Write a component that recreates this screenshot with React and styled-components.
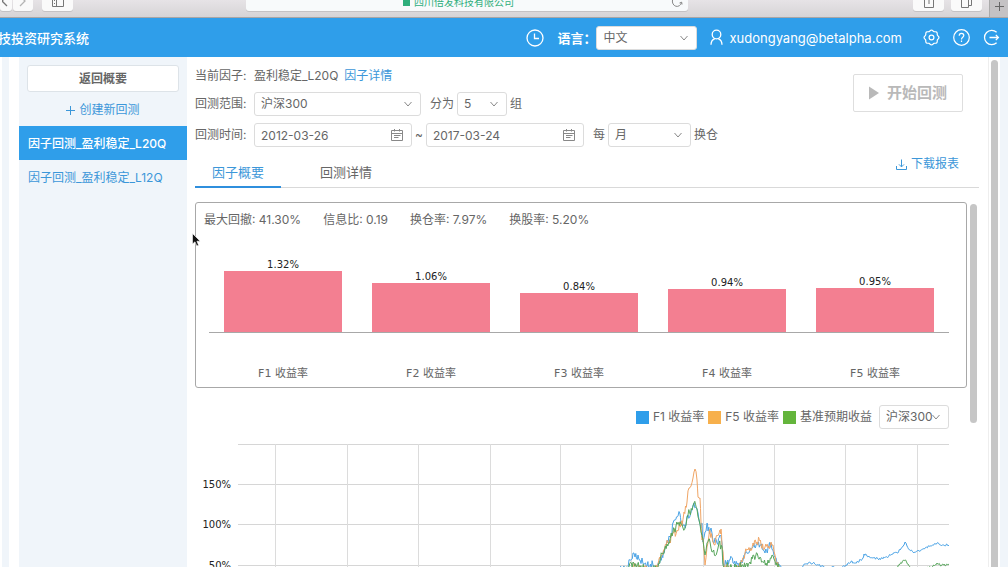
import React from 'react'
import styled, { createGlobalStyle } from 'styled-components'

const factors = [
    { name: 'F1 收益率', value: 1.32 },
    { name: 'F2 收益率', value: 1.06 },
    { name: 'F3 收益率', value: 0.84 },
    { name: 'F4 收益率', value: 0.94 },
    { name: 'F5 收益率', value: 0.95 },
]

const stats = ['最大回撤: 41.30%', '信息比: 0.19', '换仓率: 7.97%', '换股率: 5.20%']

const legend = [
    { name: 'F1 收益率', color: '#2f9eea' },
    { name: 'F5 收益率', color: '#f7b04c' },
    { name: '基准预期收益', color: '#64b53c' },
]

const gridX = [80, 152, 223, 295, 365, 436, 508, 579, 650, 722]
const gridY = [
    { y: 4, label: '' },
    { y: 44, label: '150%' },
    { y: 84, label: '100%' },
    { y: 125, label: '50%' },
    { y: 165, label: '0%' },
]

const f1 = [[400, 140], [433, 128], [435, 120], [438, 113], [440, 117], [443, 115], [445, 120], [447, 118], [449, 124], [452, 126], [458, 125], [462, 126], [464, 121], [467, 115], [470, 108], [473, 103], [475, 97], [477, 92], [478, 83], [480, 80], [483, 76], [485, 74], [486, 83], [488, 85], [491, 84], [493, 75], [497, 70], [499, 63], [502, 69], [504, 80], [506, 88], [507, 83], [508, 102], [510, 92], [512, 83], [513, 91], [516, 88], [518, 102], [520, 98], [522, 103], [525, 95], [527, 103], [528, 123], [532, 122], [535, 120], [538, 123], [543, 123], [547, 123], [549, 115], [553, 113], [558, 107], [562, 104], [565, 105], [568, 110], [570, 113], [573, 108], [576, 103], [578, 110], [580, 117], [582, 123], [584, 125], [592, 132], [604, 130], [610, 124], [613, 123], [618, 123], [623, 125], [627, 126], [632, 129], [638, 127], [645, 129], [651, 125], [653, 123], [657, 121], [658, 123], [663, 122], [668, 118], [669, 114], [673, 117], [678, 118], [683, 119], [692, 117], [697, 114], [702, 113], [705, 110], [708, 106], [710, 102], [712, 106], [715, 110], [718, 112], [723, 111], [728, 109], [735, 106], [742, 103], [745, 105], [754, 105]]
const f5 = [[400, 142], [433, 132], [440, 126], [450, 130], [462, 128], [467, 115], [473, 103], [477, 96], [482, 90], [486, 82], [487, 86], [489, 72], [492, 62], [494, 48], [496, 46], [498, 38], [500, 29], [502, 40], [503, 57], [505, 58], [506, 83], [507, 100], [508, 98], [510, 125], [512, 107], [514, 95], [515, 92], [518, 102], [520, 105], [522, 95], [525, 90], [526, 89], [527, 107], [529, 125], [535, 130], [543, 130], [547, 122], [550, 113], [553, 110], [555, 111], [558, 103], [562, 102], [565, 101], [566, 105], [570, 107], [573, 108], [576, 102], [578, 105], [580, 115], [582, 125], [590, 136], [650, 140], [754, 140]]
const base = [[400, 140], [433, 130], [438, 122], [445, 127], [455, 131], [463, 127], [467, 114], [472, 104], [477, 96], [481, 86], [486, 84], [488, 88], [491, 85], [493, 75], [497, 70], [499, 63], [502, 69], [504, 80], [506, 92], [508, 100], [510, 115], [512, 103], [515, 102], [517, 112], [522, 112], [524, 103], [527, 107], [528, 125], [535, 128], [543, 127], [547, 125], [552, 123], [555, 122], [558, 115], [565, 117], [568, 122], [571, 123], [573, 120], [577, 115], [579, 119], [581, 125], [590, 134], [690, 134], [701, 129], [705, 124], [710, 120], [713, 124], [716, 128], [730, 129], [737, 127], [742, 123], [745, 125], [754, 125]]

// adds daily wobble between the sampled points
const toPath = (points, seed) => {
    let s = seed
    const rand = () => {
        s = (s * 16807) % 2147483647
        return s / 2147483647 - 0.5
    }
    let d = 'M' + points[0].join(' ')
    for (let i = 1; i < points.length; i++) {
        const [x0, y0] = points[i - 1]
        const [x1, y1] = points[i]
        const steps = Math.max(2, Math.round((x1 - x0) * 1.2))
        const amp = x1 > 590 ? 2.4 : 9
        for (let k = 1; k < steps; k++) {
            const t = k / steps
            d += `L${(x0 + (x1 - x0) * t).toFixed(1)} ${(y0 + (y1 - y0) * t + rand() * amp).toFixed(1)}`
        }
        d += `L${x1} ${y1}`
    }
    return d
}

const gearPath = () => {
    let d = ''
    for (let i = 0; i <= 64; i++) {
        const a = (i / 64) * Math.PI * 2
        const r = 6.9 + 0.55 * Math.cos(a * 8)
        d += `${i ? 'L' : 'M'}${(8.5 + r * Math.cos(a)).toFixed(2)} ${(8.5 + r * Math.sin(a)).toFixed(2)}`
    }
    return d + 'Z'
}

const ClockIcon = () => (
    <Icon width="18" height="18" viewBox="0 0 18 18" strokeWidth="1.3">
        <circle cx="9" cy="9" r="8" />
        <path d="M8.5 4.5V9.5H13" />
    </Icon>
)

const UserIcon = () => (
    <Icon width="13" height="17" viewBox="0 0 13 17" strokeWidth="1.3">
        <circle cx="6.5" cy="5.5" r="4.3" />
        <path d="M4.8 9.6C2.4 10.6 1 12.8 1 15.8M8.2 9.6C10.6 10.6 12 12.8 12 15.8" />
    </Icon>
)

const GearIcon = () => (
    <Icon width="17" height="17" viewBox="0 0 17 17" strokeWidth="1.2">
        <path d={gearPath()} />
        <circle cx="8.5" cy="8.5" r="2.4" />
    </Icon>
)

const HelpIcon = () => (
    <Icon width="17" height="17" viewBox="0 0 17 17" strokeWidth="1.2">
        <circle cx="8.5" cy="8.5" r="7.8" />
        <path d="M6.2 6.8C6.2 5.3 7.2 4.4 8.5 4.4S10.8 5.3 10.8 6.6C10.8 8.2 8.5 8.4 8.5 10.4M8.5 11.6V13" />
    </Icon>
)

const LogoutIcon = () => (
    <Icon width="17" height="17" viewBox="0 0 17 17" strokeWidth="1.3">
        <path d="M13.6 3.2A7.2 7.2 0 1 0 13.6 13.8M6.5 8.5H15.4M12.8 5.9L15.4 8.5L12.8 11.1" />
    </Icon>
)

const DownloadIcon = () => (
    <Icon width="11" height="11" viewBox="0 0 11 11" strokeWidth="1">
        <path d="M0.5 7V10.5H10.5V7M5.5 0.5V7.8M3 5.4L5.5 7.9L8 5.4" />
    </Icon>
)

const CalendarIcon = () => (
    <Icon width="12" height="12" viewBox="0 0 12 12" strokeWidth="1">
        <path d="M0.5 1.5H11.5V11.5H0.5ZM0.5 4.5H11.5M3.5 0V2.5M8.5 0V2.5M3 6.5H9.5M3 8.5H7.5" />
    </Icon>
)

const ChevronIcon = () => (
    <Icon width="8" height="6" viewBox="0 0 8 6" strokeWidth="1">
        <path d="M0.5 1L4 5L7.5 1" />
    </Icon>
)

const Dropdown = ({ id, label, value, width }) => (
    <Control $width={width}>
        <Select id={id} aria-label={label} defaultValue={value}>
            <option>{value}</option>
        </Select>
        <ChevronIcon />
    </Control>
)

const DateField = ({ id, label, value }) => (
    <Control $width={158}>
        <DateInput id={id} aria-label={label} type="text" defaultValue={value} />
        <CalendarIcon />
    </Control>
)

const App = () => {
    return (
        <Page>
            <GlobalStyle />
            <BrowserBar>
                <BarGroup>
                    <BarButton $width={12} aria-label="后退">
                        <Icon width="8" height="14" viewBox="0 0 8 14" strokeWidth="1.3"><path d="M4 0L0 4L5 9" /></Icon>
                    </BarButton>
                    <BarButton $width={20} $dim aria-label="前进">
                        <Icon width="8" height="14" viewBox="0 0 8 14" strokeWidth="1.3"><path d="M2 0L6 4L1 9" /></Icon>
                    </BarButton>
                    <SideButton $width={31} aria-label="边栏">
                        <Icon width="12" height="14" viewBox="0 0 12 14" strokeWidth="1"><path d="M0.5 0V9.5H11.5V0M4.5 0V9.5M2 3.5H3M2 6.5H3" /></Icon>
                    </SideButton>
                </BarGroup>
                <UrlField>
                    <UrlText>
                        <svg width="7" height="18" viewBox="0 0 7 18"><path d="M0 7H7V13H0ZM1 7V4H6V7" fill="#2fae7b" /></svg>
                        四川倍发科技有限公司
                    </UrlText>
                    <Icon width="12" height="16" viewBox="0 0 12 16" strokeWidth="1"><path d="M1.5 5A4.5 5 0 0 0 10.5 7.5M8.5 8L10.7 7.2L11 9.5" /></Icon>
                </UrlField>
                <BarGroup $right>
                    <BarButton $width={31} aria-label="共享">
                        <Icon width="10" height="14" viewBox="0 0 10 14" strokeWidth="1"><path d="M0.5 3V10.5H9.5V3M5 0V7" /></Icon>
                    </BarButton>
                    <BarButton $width={31} aria-label="标签页">
                        <Icon width="11" height="14" viewBox="0 0 11 14" strokeWidth="1"><path d="M0.5 2V10.5H7.5V2M7.5 8.5H10.5V1" /></Icon>
                    </BarButton>
                    <NewTab aria-label="新标签页">
                        <Icon width="9" height="9" viewBox="0 0 9 9" strokeWidth="1"><path d="M4.5 0V9M0 4.5H9" /></Icon>
                    </NewTab>
                </BarGroup>
            </BrowserBar>

            <Header>
                <Title>技投资研究系统</Title>
                <HeaderItems>
                    <ClockIcon />
                    <Language>
                        <label htmlFor="lang">语言：</label>
                        <Dropdown id="lang" value="中文" width={101} />
                    </Language>
                    <Account href="#account">
                        <UserIcon />
                        xudongyang@betalpha.com
                    </Account>
                    <IconButton aria-label="设置"><GearIcon /></IconButton>
                    <IconButton aria-label="帮助"><HelpIcon /></IconButton>
                    <IconButton aria-label="退出"><LogoutIcon /></IconButton>
                </HeaderItems>
            </Header>

            <Body>
                <Rail />
                <Sidebar>
                    <BackButton>返回概要</BackButton>
                    <CreateLink href="#create">
                        <Icon width="9" height="9" viewBox="0 0 9 9" strokeWidth="1"><path d="M4.5 0V9M0 4.5H9" /></Icon>
                        创建新回测
                    </CreateLink>
                    <TestLink href="#l20q" $active>因子回测_盈利稳定_L20Q</TestLink>
                    <TestLink href="#l12q">因子回测_盈利稳定_L12Q</TestLink>
                </Sidebar>

                <Main>
                    <Settings>
                        <Form>
                            <Row>
                                <RowLabel as="span">当前因子:</RowLabel>
                                <span>盈利稳定_L20Q</span>
                                <DetailLink href="#factor">因子详情</DetailLink>
                            </Row>
                            <Row>
                                <RowLabel htmlFor="scope">回测范围:</RowLabel>
                                <Dropdown id="scope" value="沪深300" width={167} />
                                <Word htmlFor="groups">分为</Word>
                                <Dropdown id="groups" value="5" width={50} />
                                <span>组</span>
                            </Row>
                            <Row>
                                <RowLabel htmlFor="from">回测时间:</RowLabel>
                                <DateField id="from" value="2012-03-26" />
                                <span>~</span>
                                <DateField id="to" label="结束时间" value="2017-03-24" />
                                <Word htmlFor="period">每</Word>
                                <Dropdown id="period" value="月" width={83} />
                                <span>换仓</span>
                            </Row>
                        </Form>
                        <StartButton disabled>
                            <svg width="10" height="14" viewBox="0 0 10 14"><path d="M0 0.5L10 7L0 13.5Z" fill="#b9b9b9" /></svg>
                            开始回测
                        </StartButton>
                    </Settings>

                    <Tabs>
                        <Tab $active>因子概要</Tab>
                        <Tab>回测详情</Tab>
                        <Download href="#report">
                            <DownloadIcon />
                            下载报表
                        </Download>
                    </Tabs>

                    <Content>
                        <Report>
                            <Card>
                                <Stats>
                                    {stats.map((s) => <span key={s}>{s}</span>)}
                                </Stats>
                                <Bars>
                                    {factors.map((f) => (
                                        <BarColumn key={f.name}>
                                            <BarValue>{f.value.toFixed(2)}%</BarValue>
                                            <Bar style={{ height: Math.round(f.value * 46) }} />
                                        </BarColumn>
                                    ))}
                                </Bars>
                                <BarNames>
                                    {factors.map((f) => <span key={f.name}>{f.name}</span>)}
                                </BarNames>
                            </Card>

                            <Legend>
                                {legend.map((l) => (
                                    <LegendItem key={l.name}>
                                        <Swatch $color={l.color} />
                                        {l.name}
                                    </LegendItem>
                                ))}
                                <Dropdown id="benchmark" label="基准" value="沪深300" width={70} />
                            </Legend>

                            <Chart viewBox="0 0 754 240">
                                {gridY.map((g) => (
                                    <g key={g.y}>
                                        <line x1="43" x2="754" y1={g.y + 0.5} y2={g.y + 0.5} stroke="#d6d6d6" />
                                        <text x="36" y={g.y + 4} textAnchor="end">{g.label}</text>
                                    </g>
                                ))}
                                {gridX.map((x) => (
                                    <line key={x} x1={x + 0.5} x2={x + 0.5} y1="4" y2="230" stroke="#dcdcdc" />
                                ))}
                                <path d={toPath(f1, 11)} stroke="#4aa3e6" />
                                <path d={toPath(f5, 29)} stroke="#f0a565" />
                                <path d={toPath(base, 53)} stroke="#56a65a" />
                            </Chart>
                        </Report>
                        <InnerThumb />
                    </Content>
                </Main>

                <Gutter><Thumb /></Gutter>
                <Edge />
            </Body>

            <Pointer width="9" height="14" viewBox="0 0 9 14">
                <path d="M0.5 0.5V11L3 8.8L4.8 13L6.6 12.2L4.9 8.2H8.2Z" fill="#111" stroke="#fff" strokeWidth="0.6" />
            </Pointer>
        </Page>
    )
}

export default App

const GlobalStyle = createGlobalStyle`
* {
    box-sizing: border-box;
}
body {
    margin: 0;
    background: #fff;
}
body, button, input, select {
    font-family: Inter, "Noto Sans CJK SC", sans-serif;
    font-size: 12px;
    line-height: 18px;
    color: #666;
}
button {
    padding: 0;
    border: 0;
    background: none;
}
a {
    color: #3c97d9;
    text-decoration: none;
}
`

const Page = styled.div`
height: 100vh;
display: flex;
flex-direction: column;
overflow: hidden;
`

const Icon = styled.svg`
flex: none;
display: block;
fill: none;
stroke: currentColor;
`

const BrowserBar = styled.div`
flex: none;
height: 18px;
display: grid;
grid-template-columns: 246fr 442fr 320fr;
align-items: start;
background: linear-gradient(#e6e3e6, #d6d4d6);
border-bottom: 1px solid #a9a5a5;
`

const BarGroup = styled.div`
display: flex;
gap: ${(p) => (p.$right ? 7 : 1)}px;
justify-content: ${(p) => (p.$right ? 'flex-end' : 'flex-start')};
`

const BarButton = styled.button`
width: ${(p) => p.$width}px;
height: 11px;
display: flex;
justify-content: center;
overflow: hidden;
background: #fafafa;
border-radius: 0 0 3px 3px;
box-shadow: 0 1px 0 #c4c2c4;
color: ${(p) => (p.$dim ? '#b5b5b5' : '#777')};
svg{
    margin-top: -3px;
}
`

const SideButton = styled(BarButton)`
margin-left: 8px;
`

const NewTab = styled.button`
width: 19px;
height: 17px;
display: flex;
justify-content: center;
padding-top: 2px;
background: #c4c2c4;
border-left: 1px solid #aaa;
color: #666;
`

const UrlField = styled.div`
height: 11px;
display: flex;
align-items: flex-end;
padding-right: 5px;
overflow: hidden;
background: #f8fafb;
border-radius: 0 0 3px 3px;
box-shadow: 0 1px 0 #c4c2c4;
color: #888;
`

const UrlText = styled.div`
flex: 1;
display: flex;
justify-content: center;
gap: 4px;
font-size: 10px;
color: #2fae7b;
`

const Header = styled.header`
flex: none;
height: 39px;
display: flex;
align-items: center;
justify-content: space-between;
padding-right: 8px;
background: #2f9eea;
color: #fff;
`

const Title = styled.div`
width: 89px;
display: flex;
justify-content: flex-end;
overflow: hidden;
white-space: nowrap;
font-size: 13px;
font-weight: 500;
`

const HeaderItems = styled.div`
display: flex;
align-items: center;
gap: 13px;
`

const Language = styled.div`
display: flex;
align-items: center;
font-size: 13px;
font-weight: 600;
`

const Account = styled.a`
display: flex;
align-items: center;
gap: 6px;
margin-right: 8px;
color: #fff;
font-size: 13px;
`

const IconButton = styled.button`
color: #fff;
`

const Control = styled.span`
flex: none;
position: relative;
width: ${(p) => p.$width}px;
height: 24px;
display: flex;
align-items: center;
background: #fff;
border: 1px solid #dcdcdc;
border-radius: 3px;
color: #888;
svg{
    position: absolute;
    right: 8px;
    pointer-events: none;
}
`

const Select = styled.select`
appearance: none;
width: 100%;
height: 22px;
padding: 0 6px;
border: 0;
outline: none;
background: transparent;
`

const DateInput = styled.input`
width: 100%;
height: 22px;
padding: 0 6px;
border: 0;
outline: none;
background: transparent;
`

const Body = styled.div`
flex: 1;
min-height: 0;
display: flex;
`

const Rail = styled.div`
flex: none;
width: 19px;
border-left: 2px solid #fff;
border-right: 10px solid #fff;
background: #f0f5fa;
`

const Sidebar = styled.nav`
flex: none;
width: 168px;
display: flex;
flex-direction: column;
padding-top: 8px;
background: #f0f5fa;
`

const BackButton = styled.button`
height: 27px;
margin: 0 8px;
background: #fff;
border: 1px solid #dde3e8;
border-radius: 3px;
font-weight: 600;
`

const CreateLink = styled.a`
height: 34px;
display: flex;
align-items: center;
justify-content: center;
gap: 4px;
padding-top: 2px;
`

const TestLink = styled.a`
height: 34px;
padding: 0 9px;
line-height: 36px;
white-space: nowrap;
background: ${(p) => (p.$active ? '#2f9eea' : 'transparent')};
color: ${(p) => (p.$active ? '#fff' : '#3c97d9')};
font-weight: ${(p) => (p.$active ? 500 : 400)};
`

const Main = styled.main`
flex: 1;
min-width: 0;
padding: 10px 9px 0 8px;
display: flex;
flex-direction: column;
`

const Settings = styled.div`
display: flex;
justify-content: space-between;
align-items: flex-start;
`

const Form = styled.div`
display: flex;
flex-direction: column;
gap: 7px;
`

const Row = styled.div`
display: flex;
align-items: center;
gap: 3px;
white-space: nowrap;
`

const RowLabel = styled.label`
width: 56px;
`

const Word = styled.label`
margin-left: 6px;
`

const DetailLink = styled.a`
margin-left: 3px;
`

const StartButton = styled.button`
width: 110px;
height: 38px;
margin: 7px 16px 0 0;
display: flex;
align-items: center;
justify-content: center;
gap: 8px;
background: #fff;
border: 1px solid #dedede;
border-radius: 2px;
color: #b9b9b9;
font-size: 15px;
font-weight: 600;
`

const Tabs = styled.div`
flex: none;
height: 41px;
display: flex;
align-items: flex-end;
gap: 22px;
border-bottom: 1px solid #d9d9d9;
`

const Tab = styled.button`
height: 32px;
padding: 2px 17px 0;
margin-bottom: -1px;
border-bottom: 2px solid ${(p) => (p.$active ? '#2f8fdd' : 'transparent')};
color: ${(p) => (p.$active ? '#3c97d9' : '#666')};
font-size: 13px;
`

const Download = styled.a`
display: flex;
align-items: center;
gap: 4px;
margin: 0 20px 14px auto;
`

const Content = styled.div`
flex: 1;
min-height: 0;
display: flex;
gap: 3px;
padding: 14px 2px 0 0;
`

const Report = styled.div`
flex: 1;
min-width: 0;
`

const InnerThumb = styled.div`
width: 7px;
height: 219px;
margin-top: 2px;
border-radius: 4px;
background: #c6c6c6;
`

const Card = styled.section`
padding: 8px 17px 4px 13px;
border: 1px solid #a8a8a8;
border-radius: 3px;
`

const Stats = styled.div`
display: flex;
gap: 22px;
margin-left: -5px;
`

const Bars = styled.div`
height: 104px;
display: grid;
grid-template-columns: repeat(5, 1fr);
border-bottom: 1px solid #a8a8a8;
`

const BarColumn = styled.div`
display: flex;
flex-direction: column;
justify-content: flex-end;
align-items: center;
`

const BarValue = styled.span`
font-family: "DejaVu Sans", sans-serif;
font-size: 10px;
line-height: 12px;
color: #222;
`

const Bar = styled.div`
width: 80%;
background: #f37f91;
`

const BarNames = styled.div`
display: grid;
grid-template-columns: repeat(5, 1fr);
margin-top: 32px;
text-align: center;
font-family: "DejaVu Sans", "Noto Sans CJK SC", sans-serif;
font-size: 11px;
`

const Legend = styled.div`
display: flex;
align-items: center;
justify-content: flex-end;
gap: 4px;
margin: 17px 18px 11px 0;
`

const LegendItem = styled.span`
display: flex;
align-items: center;
gap: 4px;
&:nth-child(3){
    margin-right: 3px;
}
`

const Swatch = styled.i`
width: 13px;
height: 13px;
background: ${(p) => p.$color};
`

const Chart = styled.svg`
display: block;
width: calc(100% - 18px);
path{
    fill: none;
    stroke-width: 1;
}
text{
    font-family: "DejaVu Sans", sans-serif;
    font-size: 10px;
    fill: #222;
}
`

const Gutter = styled.div`
flex: none;
width: 12px;
padding: 3px 2px 0 2px;
border-left: 1px solid #eee;
`

const Thumb = styled.div`
width: 7px;
height: 100%;
border-radius: 4px 4px 0 0;
background: #c6c6c6;
`

const Edge = styled.div`
flex: none;
width: 8px;
background: #f0f5fa;
`

const Pointer = styled.svg`
position: fixed;
left: 192px;
top: 233px;
pointer-events: none;
`
